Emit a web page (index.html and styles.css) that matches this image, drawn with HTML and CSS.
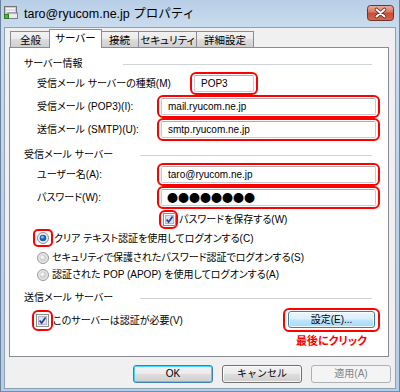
FILE: index.html
```html
<!DOCTYPE html>
<html lang="ja">
<head>
<meta charset="utf-8">
<title>taro@ryucom.ne.jp プロパティ</title>
<link rel="stylesheet" href="styles.css">
</head>
<body>
<div class="window">
  <div class="titlebar">
    <svg class="app-icon" width="14" height="14" viewBox="0 0 14 14">
      <rect x="0.5" y="1.5" width="12" height="9" fill="#c9ccd0" stroke="#6f7378"/>
      <rect x="2" y="3" width="9" height="1.5" fill="#f4f5f6"/>
      <rect x="2" y="5.5" width="9" height="1.5" fill="#f4f5f6"/>
      <rect x="4" y="8" width="9.5" height="5.5" fill="#e8eaec" stroke="#7b7f84" stroke-width="1"/>
      <rect x="0.5" y="9.5" width="4" height="4" fill="#4fb43a" stroke="#2f7d22"/>
    </svg>
    <span class="title">taro@ryucom.ne.jp プロパティ</span>
    <svg class="close-btn" width="27" height="16" viewBox="0 0 27 16">
      <defs>
        <linearGradient id="closeg" x1="0" y1="0" x2="0" y2="1">
          <stop offset="0" stop-color="#ebb1a4"/>
          <stop offset="0.45" stop-color="#d9735f"/>
          <stop offset="0.5" stop-color="#c84a31"/>
          <stop offset="1" stop-color="#d66a4e"/>
        </linearGradient>
      </defs>
      <rect x="0.5" y="0.5" width="26" height="15" rx="3" fill="url(#closeg)" stroke="#6e3328"/>
      <path d="M9.5 4.5 L17.5 11.5 M17.5 4.5 L9.5 11.5" stroke="#5a2a22" stroke-width="3.6" stroke-linecap="round"/>
      <path d="M9.5 4.5 L17.5 11.5 M17.5 4.5 L9.5 11.5" stroke="#ffffff" stroke-width="2" stroke-linecap="round"/>
    </svg>
  </div>

  <div class="client">
    <div class="tabs">
      <div class="tab tab-general">全般</div>
      <div class="tab tab-server active">サーバー</div>
      <div class="tab tab-conn">接続</div>
      <div class="tab tab-sec">セキュリティ</div>
      <div class="tab tab-adv">詳細設定</div>
    </div>

    <div class="panel">
      <div class="group-head"><span class="group-label gl-first">サーバー情報</span><i class="rule"></i></div>

      <div class="row">
        <span class="label label-type">受信メール サーバーの種類(M)</span>
        <div class="hl hl-field hl-type"><div class="field">POP3</div></div>
      </div>
      <div class="row">
        <span class="label">受信メール (POP3)(I):</span>
        <div class="hl hl-field hl-wide"><div class="field">mail.ryucom.ne.jp</div></div>
      </div>
      <div class="row">
        <span class="label">送信メール (SMTP)(U):</span>
        <div class="hl hl-field hl-wide"><div class="field">smtp.ryucom.ne.jp</div></div>
      </div>

      <div class="group-head gh-gap"><span class="group-label">受信メール サーバー</span><i class="rule"></i></div>

      <div class="row">
        <span class="label">ユーザー名(A):</span>
        <div class="hl hl-field hl-wide"><div class="field">taro@ryucom.ne.jp</div></div>
      </div>
      <div class="row">
        <span class="label">パスワード(W):</span>
        <div class="hl hl-field hl-wide"><div class="field field-pass">●●●●●●●●</div></div>
      </div>

      <div class="opt opt-savepw">
        <div class="hl hl-box">
          <svg class="checkbox" width="13" height="13" viewBox="0 0 13 13">
            <rect x="0.5" y="0.5" width="12" height="12" fill="#f6f6f6" stroke="#8e8f8f"/>
            <rect x="2.5" y="2.5" width="8" height="8" fill="#dde3ea" stroke="#b3b9c1"/>
            <path d="M3.6 6.4 L5.6 9.1 L9.6 3.4" fill="none" stroke="#2d3f98" stroke-width="1.7"/>
          </svg>
        </div>
        <span class="opt-text">パスワードを保存する(W)</span>
      </div>

      <div class="opt opt-radio1">
        <div class="hl hl-radio">
          <svg class="radio" width="12" height="12" viewBox="0 0 12 12">
            <circle cx="6" cy="6" r="5.5" fill="#eceef0" stroke="#8e8f8f"/>
            <circle cx="6" cy="6" r="3.3" fill="#1a5fb4"/>
            <circle cx="5.4" cy="5.2" r="1.4" fill="#7cc6f4"/>
          </svg>
        </div>
        <span class="opt-text">クリア テキスト認証を使用してログオンする(C)</span>
      </div>
      <div class="opt opt-radio">
        <svg class="radio radio-plain" width="12" height="12" viewBox="0 0 12 12">
          <circle cx="6" cy="6" r="5.5" fill="#e6e6e6" stroke="#9a9a9a"/>
          <circle cx="6" cy="6" r="3.5" fill="#d2d2d2"/>
          <circle cx="5.4" cy="5.2" r="1.8" fill="#f4f4f4"/>
        </svg>
        <span class="opt-text">セキュリティで保護されたパスワード認証でログオンする(S)</span>
      </div>
      <div class="opt opt-radio">
        <svg class="radio radio-plain" width="12" height="12" viewBox="0 0 12 12">
          <circle cx="6" cy="6" r="5.5" fill="#e6e6e6" stroke="#9a9a9a"/>
          <circle cx="6" cy="6" r="3.5" fill="#d2d2d2"/>
          <circle cx="5.4" cy="5.2" r="1.8" fill="#f4f4f4"/>
        </svg>
        <span class="opt-text">認証された POP (APOP) を使用してログオンする(A)</span>
      </div>

      <div class="group-head gh-gap3"><span class="group-label">送信メール サーバー</span><i class="rule"></i></div>

      <div class="auth-row">
        <div class="opt opt-auth">
          <div class="hl hl-box hl-box2">
            <svg class="checkbox" width="13" height="13" viewBox="0 0 13 13">
              <rect x="0.5" y="0.5" width="12" height="12" fill="#f6f6f6" stroke="#8e8f8f"/>
              <rect x="2.5" y="2.5" width="8" height="8" fill="#dde3ea" stroke="#b3b9c1"/>
              <path d="M3.6 6.4 L5.6 9.1 L9.6 3.4" fill="none" stroke="#2d3f98" stroke-width="1.7"/>
            </svg>
          </div>
          <span class="opt-text">このサーバーは認証が必要(V)</span>
        </div>
        <div class="settings-col">
          <div class="hl hl-btn"><div class="btn btn-hot">設定(E)...</div></div>
          <div class="note">最後にクリック</div>
        </div>
      </div>
    </div>

    <div class="dialog-buttons">
      <div class="btn btn-default">OK</div>
      <div class="btn">キャンセル</div>
      <div class="btn btn-disabled">適用(A)</div>
    </div>
  </div>
</div>
</body>
</html>
```

FILE: styles.css
```css
* { box-sizing: border-box; }

html, body {
  margin: 0;
  padding: 0;
}

body {
  width: 400px;
  height: 392px;
  overflow: hidden;
  font-family: "Liberation Sans", "Noto Sans CJK JP", sans-serif;
  font-size: 10px;
  color: #000;
  font-feature-settings: "palt";
}

.window {
  width: 400px;
  height: 392px;
  display: flex;
  flex-direction: column;
  padding: 0 3px 3px 3px;
  border-left: 1px solid #6c819a;
  border-right: 1px solid #6c819a;
  background: linear-gradient(180deg, #b8cee6 0, #c9dbee 26px, #bcd2ea 200px, #b5cde6 100%);
  box-shadow: inset 0 -1px 0 #3fa3c9;
}

/* title bar */
.titlebar {
  height: 27px;
  display: flex;
  align-items: flex-start;
  flex: none;
}

.app-icon {
  margin: 5px 0 0 0;
  flex: none;
}

.title {
  margin: 6px 0 0 6px;
  font-size: 12.5px;
  line-height: 16px;
  color: #000;
  font-feature-settings: normal;
}

.close-btn {
  margin: 5px 2px 0 auto;
  flex: none;
}

/* client area */
.client {
  flex: 1;
  display: flex;
  flex-direction: column;
  background: #f0f0f0;
  border: 1px solid #8da0b6;
  padding: 0 4px 0 4px;
}

/* tabs */
.tabs {
  height: 19px;
  display: flex;
  align-items: flex-end;
  padding-left: 1px;
  flex: none;
}

.tab {
  height: 16px;
  border: 1px solid #898c95;
  border-bottom: none;
  background: linear-gradient(180deg, #f2f2f2 0, #ebebeb 45%, #dddddd 50%, #cfcfcf 100%);
  display: flex;
  align-items: center;
  justify-content: center;
  font-size: 10.5px;
  line-height: 12px;
  padding-top: 1px;
  position: relative;
}

.tab-general { width: 41px; }
.tab-server { width: 53px; }
.tab-conn { width: 39px; }
.tab-sec { width: 59px; margin-left: -1px; }
.tab-adv { width: 58px; margin-left: -1px; }

.tab.active {
  height: 19px;
  margin: 0 -2px -1px -2px;
  background: #fff;
  z-index: 2;
  padding-top: 0;
  padding-bottom: 2px;
}

/* panel */
.panel {
  height: 310px;
  margin-right: 2px;
  background: #fff;
  border: 1px solid #898c95;
  padding: 9px 8px 0 14px;
  flex: none;
}

.group-head {
  height: 14px;
  display: flex;
  align-items: center;
}

.group-label {
  width: 99px;
  flex: none;
  line-height: 14px;
}

.group-head .group-label:not(.gl-first) {
  width: 116px;
}

.rule {
  flex: 1;
  height: 1px;
  margin-right: 8px;
  margin-top: 1px;
  background: #cfd4d9;
}

.gh-gap { margin-top: 7px; }
.gh-gap3 { margin-top: 8px; }

.row {
  height: 23px;
  display: flex;
  align-items: center;
}

.group-head + .row { margin-top: 1px; }

.label {
  width: 133px;
  padding-left: 13px;
  flex: none;
  line-height: 13px;
  white-space: nowrap;
}

.label-type {
  width: 166px;
}

/* red highlight outline */
.hl {
  border: 2px solid #ff0000;
  border-radius: 6px;
  flex: none;
}

.hl-field {
  height: 23px;
  padding: 1px 2px;
}

.hl-wide { width: 223px; }
.hl-type { width: 68px; }

.field {
  height: 17px;
  border: 1px solid #c6cad2;
  border-top-color: #a9adb5;
  border-radius: 2px;
  background: #fff;
  padding-left: 6px;
  line-height: 15px;
  white-space: nowrap;
  font-feature-settings: normal;
}

.field-pass {
  font-family: "Noto Sans CJK JP", sans-serif;
  font-size: 11px;
  letter-spacing: 0;
  padding-left: 5px;
}

/* options */
.opt {
  display: flex;
  align-items: center;
}

.opt-text {
  line-height: 13px;
  white-space: nowrap;
}

.opt-savepw {
  height: 19px;
  margin: 1px 0 0 135px;
}

.opt-savepw .opt-text { margin-left: 1px; }

.hl-box {
  width: 19px;
  height: 19px;
  padding: 1px 2px;
  display: flex;
}

.hl-radio {
  width: 20px;
  height: 18px;
  padding: 1px 2px;
  display: flex;
  border-radius: 5px;
}

.checkbox, .radio { flex: none; display: block; }

.opt-radio1 {
  height: 18px;
  margin-left: 9px;
}

.opt-radio1 .opt-text { margin-left: 1px; }

.opt-radio {
  height: 17px;
  margin-left: 13px;
}

.opt-radio1 + .opt-radio { margin-top: 2px; }

.radio-plain { margin-right: 3px; }

/* auth + settings */
.auth-row {
  display: flex;
  justify-content: space-between;
  align-items: flex-start;
  margin-top: 3px;
}

.opt-auth {
  margin: 2px 0 0 8px;
}

.hl-box2 {
  width: 21px;
  height: 21px;
  padding: 2px 2px;
}

.settings-col {
  display: flex;
  flex-direction: column;
  align-items: center;
}

.hl-btn {
  width: 97px;
  height: 24px;
  padding: 1px 3px 2px 3px;
}

.note {
  margin-top: 3px;
  color: #ff0000;
  font-weight: bold;
  font-size: 11px;
  line-height: 13px;
}

/* buttons */
.btn {
  height: 18px;
  border: 1px solid #707070;
  border-radius: 3px;
  background: linear-gradient(180deg, #f2f2f2 0, #ebebeb 48%, #dddddd 52%, #cfcfcf 100%);
  box-shadow: inset 0 0 0 1px rgba(255,255,255,0.8);
  display: flex;
  align-items: center;
  justify-content: center;
  line-height: 12px;
  white-space: nowrap;
  font-feature-settings: normal;
}

.btn-hot {
  height: 17px;
  border-color: #3c7fb1;
  background: linear-gradient(180deg, #eaf6fd 0, #d9f0fc 48%, #bee6fd 52%, #a7d9f5 100%);
}

.dialog-buttons {
  display: flex;
  justify-content: flex-end;
  gap: 9px;
  margin-top: 8px;
  flex: none;
}

.dialog-buttons .btn {
  width: 80px;
}

.btn-default {
  border-color: #3c7fb1;
  box-shadow: inset 0 0 0 1px #48d4f9;
}

.btn-disabled {
  border-color: #adb2b5;
  background: #f4f4f4;
  color: #838383;
  box-shadow: none;
}
```
